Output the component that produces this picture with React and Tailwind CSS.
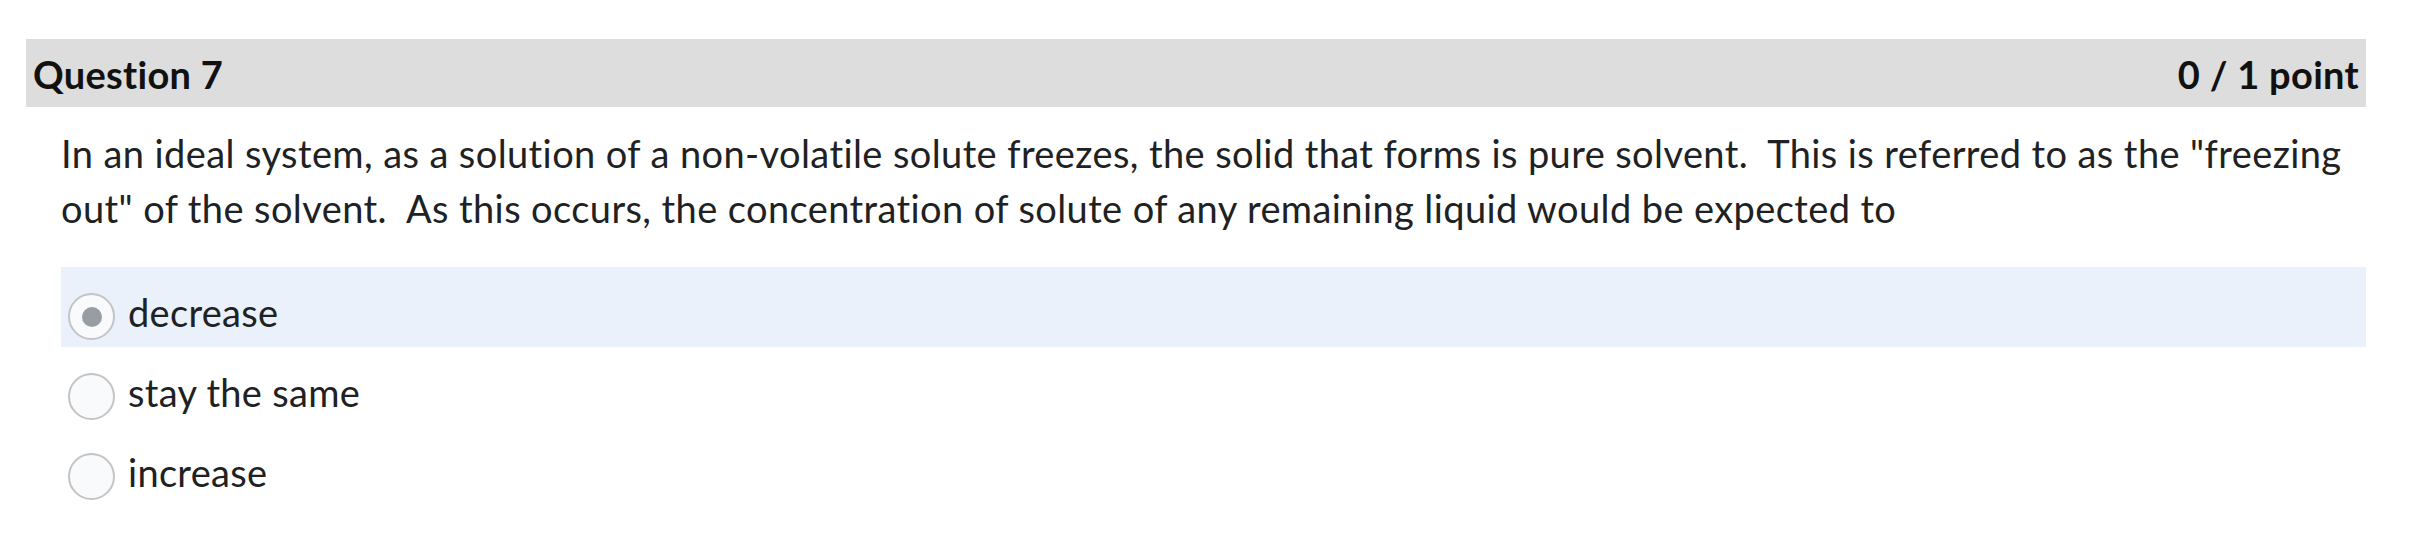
const options = [
  { label: "decrease", selected: true },
  { label: "stay the same", selected: false },
  { label: "increase", selected: false },
];

function Radio({ checked }) {
  return (
    <span className="mt-[8px] flex h-[47px] w-[47px] shrink-0 items-center justify-center rounded-full border-2 border-[#c3c4c6] bg-[#f9fafc]">
      {checked && <span className="h-[20px] w-[20px] rounded-full bg-[#989ca3]" />}
    </span>
  );
}

export default function App() {
  return (
    <div className="w-full h-[536px] bg-white font-['Lato','Noto_Sans',sans-serif] text-[#202122] tracking-[0.3px] [font-variant-ligatures:none]">
      <div className="pt-[39px] pl-[26px] w-[2366px]">
        <div className="h-[68px] bg-[#dddddd] flex items-center justify-between px-[7px] pt-[2px] text-[38px] font-bold text-[#111111]">
          <h2>Question 7</h2>
          <span>0 / 1 point</span>
        </div>

        <div className="pl-[35px]">
          <p className="mt-[19px] text-[38px] leading-[55px] tracking-[0.4px]">
            In an ideal system, as a solution of a non-volatile solute freezes, the solid that forms is pure solvent.{"\u00a0 "}This is referred to as the "freezing out" of the solvent.{"\u00a0 "}As this occurs, the concentration of solute of any remaining liquid would be expected to
          </p>

          <div className="mt-[31px] flex flex-col">
            {options.map((opt) => (
              <label
                key={opt.label}
                className={
                  "h-[80px] flex items-start gap-[13px] pl-[7px] pt-[18px] " +
                  (opt.selected ? "bg-[#eaf1fb]" : "")
                }
              >
                <Radio checked={opt.selected} />
                <span className="text-[38px] leading-[54px]">{opt.label}</span>
              </label>
            ))}
          </div>
        </div>
      </div>
    </div>
  );
}
